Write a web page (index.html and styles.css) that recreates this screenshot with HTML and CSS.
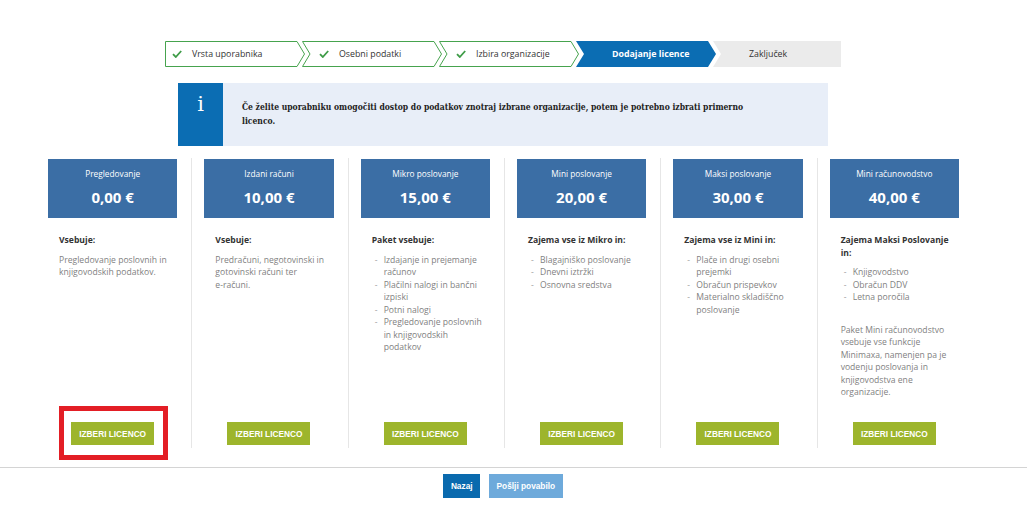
FILE: index.html
```html
<!DOCTYPE html>
<html lang="sl">
<head>
<meta charset="utf-8">
<title>Dodajanje licence</title>
<link rel="stylesheet" href="styles.css">
</head>
<body>
<div class="page">
  <div class="stepper">
    <div class="step done first">
      <svg class="step-bg" viewBox="0 0 140 26" preserveAspectRatio="none"><polygon points="0.5,0.5 132,0.5 139.5,13 132,25.5 0.5,25.5"/></svg>
      <svg class="check" viewBox="0 0 10 8"><path d="M1 4.2 L3.8 7 L9.2 1"/></svg>
      <span class="step-label">Vrsta uporabnika</span>
    </div>
    <div class="step done">
      <svg class="step-bg" viewBox="0 0 140 26" preserveAspectRatio="none"><polygon points="0.5,0.5 132,0.5 139.5,13 132,25.5 0.5,25.5 8,13"/></svg>
      <svg class="check" viewBox="0 0 10 8"><path d="M1 4.2 L3.8 7 L9.2 1"/></svg>
      <span class="step-label">Osebni podatki</span>
    </div>
    <div class="step done">
      <svg class="step-bg" viewBox="0 0 140 26" preserveAspectRatio="none"><polygon points="0.5,0.5 132,0.5 139.5,13 132,25.5 0.5,25.5 8,13"/></svg>
      <svg class="check" viewBox="0 0 10 8"><path d="M1 4.2 L3.8 7 L9.2 1"/></svg>
      <span class="step-label">Izbira organizacije</span>
    </div>
    <div class="step active">
      <svg class="step-bg" viewBox="0 0 140 26" preserveAspectRatio="none"><polygon points="0,0 132,0 140,13 132,26 0,26 8,13"/></svg>
      <span class="step-label">Dodajanje licence</span>
    </div>
    <div class="step todo">
      <svg class="step-bg" viewBox="0 0 128 26" preserveAspectRatio="none"><polygon points="0,0 128,0 128,26 0,26 8,13"/></svg>
      <span class="step-label">Zaključek</span>
    </div>
  </div>

  <div class="info">
    <div class="info-icon">i</div>
    <p class="info-text">Če želite uporabniku omogočiti dostop do podatkov znotraj izbrane organizacije, potem je potrebno izbrati primerno licenco.</p>
  </div>

  <div class="plans">
    <div class="plan">
      <div class="plan-head"><div class="plan-name">Pregledovanje</div><div class="plan-price">0,00 €</div></div>
      <div class="plan-body">
        <h3 class="plan-title">Vsebuje:</h3>
        <p class="plan-text">Pregledovanje poslovnih in knjigovodskih podatkov.</p>
      </div>
      <div class="plan-foot">
        <span class="btn-wrap"><button class="btn-select">IZBERI LICENCO</button><span class="highlight"></span></span>
      </div>
    </div>
    <div class="plan">
      <div class="plan-head"><div class="plan-name">Izdani računi</div><div class="plan-price">10,00 €</div></div>
      <div class="plan-body">
        <h3 class="plan-title">Vsebuje:</h3>
        <p class="plan-text">Predračuni, negotovinski in gotovinski računi ter <span class="nowrap">e-računi.</span></p>
      </div>
      <div class="plan-foot"><button class="btn-select">IZBERI LICENCO</button></div>
    </div>
    <div class="plan">
      <div class="plan-head"><div class="plan-name">Mikro poslovanje</div><div class="plan-price">15,00 €</div></div>
      <div class="plan-body">
        <h3 class="plan-title">Paket vsebuje:</h3>
        <ul class="plan-list">
          <li>Izdajanje in prejemanje računov</li>
          <li>Plačilni nalogi in bančni izpiski</li>
          <li>Potni nalogi</li>
          <li>Pregledovanje poslovnih in knjigovodskih podatkov</li>
        </ul>
      </div>
      <div class="plan-foot"><button class="btn-select">IZBERI LICENCO</button></div>
    </div>
    <div class="plan">
      <div class="plan-head"><div class="plan-name">Mini poslovanje</div><div class="plan-price">20,00 €</div></div>
      <div class="plan-body">
        <h3 class="plan-title">Zajema vse iz Mikro in:</h3>
        <ul class="plan-list">
          <li>Blagajniško poslovanje</li>
          <li>Dnevni iztržki</li>
          <li>Osnovna sredstva</li>
        </ul>
      </div>
      <div class="plan-foot"><button class="btn-select">IZBERI LICENCO</button></div>
    </div>
    <div class="plan">
      <div class="plan-head"><div class="plan-name">Maksi poslovanje</div><div class="plan-price">30,00 €</div></div>
      <div class="plan-body">
        <h3 class="plan-title">Zajema vse iz Mini in:</h3>
        <ul class="plan-list">
          <li>Plače in drugi osebni prejemki</li>
          <li>Obračun prispevkov</li>
          <li>Materialno skladiščno poslovanje</li>
        </ul>
      </div>
      <div class="plan-foot"><button class="btn-select">IZBERI LICENCO</button></div>
    </div>
    <div class="plan">
      <div class="plan-head"><div class="plan-name">Mini računovodstvo</div><div class="plan-price">40,00 €</div></div>
      <div class="plan-body">
        <h3 class="plan-title">Zajema Maksi Poslovanje in:</h3>
        <ul class="plan-list">
          <li>Knjigovodstvo</li>
          <li>Obračun DDV</li>
          <li>Letna poročila</li>
        </ul>
        <p class="plan-text plan-note">Paket Mini računovodstvo vsebuje vse funkcije Minimaxa, namenjen pa je vodenju poslovanja in knjigovodstva ene organizacije.</p>
      </div>
      <div class="plan-foot"><button class="btn-select">IZBERI LICENCO</button></div>
    </div>
  </div>
</div>

<div class="footer">
  <div class="footer-inner">
    <button class="btn btn-back">Nazaj</button>
    <button class="btn btn-send">Pošlji povabilo</button>
  </div>
</div>
</body>
</html>
```

FILE: styles.css
```css
* { box-sizing: border-box; }

html, body {
  margin: 0;
  padding: 0;
  background: #ffffff;
}

body {
  font-family: "Open Sans", "Noto Sans", sans-serif;
  color: #333333;
  width: 1027px;
  height: 509px;
  overflow: hidden;
}

.page {
  width: 1006px;
  padding-top: 41px;
}

/* ---------- stepper ---------- */
.stepper {
  display: flex;
  width: 676px;
  height: 26px;
  margin: 0 auto;
}

.step {
  position: relative;
  flex: none;
  width: 140px;
  height: 26px;
  margin-left: -3px;
  padding-left: 17px;
  display: flex;
  align-items: center;
  font-size: 8.8px;
  color: #333333;
}

.step.first {
  margin-left: 0;
  padding-left: 7px;
}

.step-bg {
  position: absolute;
  left: 0;
  top: 0;
  width: 100%;
  height: 100%;
}

.step.done .step-bg polygon {
  fill: #ffffff;
  stroke: #46a34e;
  stroke-width: 1;
}

.step.active .step-bg polygon { fill: #0b6db3; }
.step.todo .step-bg polygon { fill: #ebebeb; }

.check {
  position: relative;
  width: 10px;
  height: 8px;
  margin-right: 10px;
  flex: none;
}

.check path {
  fill: none;
  stroke: #3f9c48;
  stroke-width: 1.8;
}

.step-label {
  position: relative;
  white-space: nowrap;
}

.step.active,
.step.todo {
  padding-left: 36px;
}

.step.active .step-label {
  color: #ffffff;
  font-weight: 700;
}

.step.todo {
  width: 128px;
}

/* ---------- info ---------- */
.info {
  display: flex;
  align-items: center;
  width: 650px;
  height: 63px;
  margin: 16px auto 0;
  background: #e8eef8;
}

.info-icon {
  align-self: stretch;
  flex: none;
  width: 45px;
  background: #0b6db3;
  color: #ffffff;
  font-family: "DejaVu Serif", serif;
  font-size: 21px;
  line-height: 1;
  text-align: center;
  padding-top: 11px;
}

.info-text {
  margin: 0 0 0 19px;
  width: 520px;
  font-family: "DejaVu Serif Condensed", "DejaVu Serif", serif;
  font-stretch: condensed;
  font-weight: 700;
  font-size: 8.5px;
  line-height: 13.5px;
  color: #222222;
}

/* ---------- plans ---------- */
.plans {
  display: flex;
  width: 940px;
  height: 290px;
  margin: 12px auto 0;
  padding-left: 3px;
}

.plan {
  flex: 1 1 0;
  display: flex;
  flex-direction: column;
  padding: 1px 14px 0 12px;
}

.plan + .plan {
  border-left: 1px solid #e6e6e6;
}

.plan-head {
  height: 59px;
  background: #3b6ea5;
  color: #ffffff;
  text-align: center;
  padding-top: 9px;
}

.plan-name {
  font-size: 8.3px;
  line-height: 12px;
}

.plan-price {
  font-size: 15px;
  font-weight: 700;
  line-height: 18px;
  margin-top: 8px;
}

.plan-body {
  flex: 1;
  padding: 16px 6px 0 11px;
  font-size: 8.6px;
  line-height: 12.5px;
}

.plan-title {
  margin: 0 0 7px;
  font-size: 8.6px;
  line-height: 12.5px;
  font-weight: 700;
  color: #333333;
}

.plan-text {
  margin: 0;
  color: #7f7f7f;
}

.nowrap {
  white-space: nowrap;
}

.plan-list {
  list-style: none;
  margin: 0;
  padding: 0 0 0 12px;
  color: #7f7f7f;
}

.plan-list li::before {
  content: "-";
  display: inline-block;
  width: 9px;
  margin-left: -9px;
  color: #a0a0a0;
}

.plan-note {
  margin-top: 20px;
}

.plan-foot {
  display: flex;
  justify-content: center;
  padding-bottom: 3px;
}

.btn-wrap {
  position: relative;
  display: inline-block;
}

.btn-select {
  display: block;
  width: 83px;
  height: 23px;
  border: 0;
  padding: 0;
  background: #9db52c;
  color: #ffffff;
  font-family: "Liberation Sans", Arial, sans-serif;
  font-weight: 700;
  font-size: 8.3px;
  cursor: pointer;
}

.highlight {
  position: absolute;
  top: -16px;
  left: -12px;
  right: -14px;
  bottom: -15px;
  border: 5px solid #e31e25;
  pointer-events: none;
}

/* ---------- footer ---------- */
.footer {
  margin-top: 19px;
  border-top: 1px solid #d4d4d4;
  padding-top: 6px;
}

.footer-inner {
  width: 1006px;
  display: flex;
  justify-content: center;
  gap: 9px;
}

.btn {
  height: 24px;
  border: 0;
  padding: 0 7.5px;
  color: #ffffff;
  font-family: "Liberation Sans", Arial, sans-serif;
  font-weight: 700;
  font-size: 8.3px;
}

.btn-back { background: #0a6aae; }
.btn-send { background: #6eaadb; }
```
